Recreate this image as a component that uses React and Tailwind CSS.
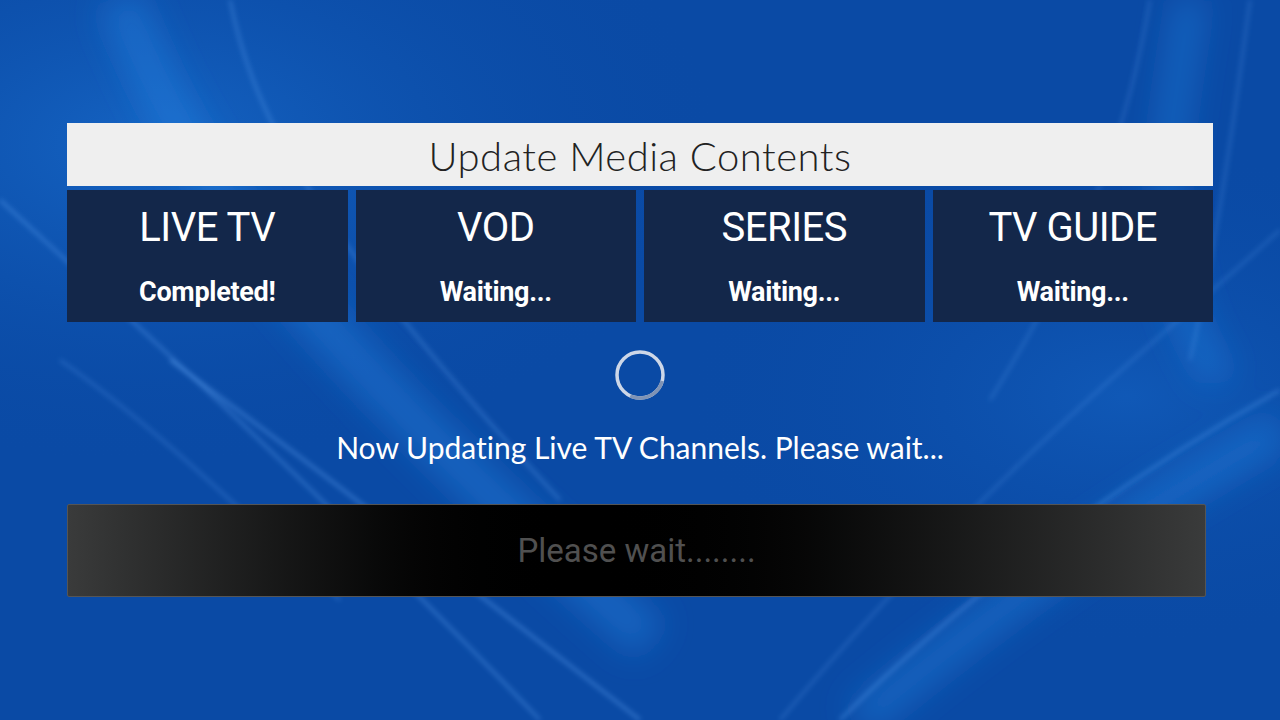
// Update Media Contents — loading screen with per-category status cards
const CATEGORIES = [
  { name: "LIVE TV", status: "Completed!" },
  { name: "VOD", status: "Waiting..." },
  { name: "SERIES", status: "Waiting..." },
  { name: "TV GUIDE", status: "Waiting..." },
];

function Backdrop() {
  // soft light streaks over the blue wallpaper
  return (
    <svg
      className="absolute inset-0 w-full h-full"
      viewBox="0 0 1280 720"
      preserveAspectRatio="none"
    >
      <defs>
        <radialGradient id="glowTL" cx="0.12" cy="0.2" r="0.45">
          <stop offset="0" stopColor="#1a6fd0" stopOpacity="0.7" />
          <stop offset="1" stopColor="#0a4aa5" stopOpacity="0" />
        </radialGradient>
        <radialGradient id="glowR" cx="0.88" cy="0.55" r="0.35">
          <stop offset="0" stopColor="#1667c8" stopOpacity="0.5" />
          <stop offset="1" stopColor="#0a4aa5" stopOpacity="0" />
        </radialGradient>
        <filter id="soft" x="-20%" y="-20%" width="140%" height="140%">
          <feGaussianBlur stdDeviation="2.5" />
        </filter>
        <filter id="wide" x="-20%" y="-20%" width="140%" height="140%">
          <feGaussianBlur stdDeviation="16" />
        </filter>
      </defs>
      <rect width="1280" height="720" fill="#0a4aa5" />
      <rect width="1280" height="720" fill="url(#glowTL)" />
      <rect width="1280" height="720" fill="url(#glowR)" />

      {/* wide glows */}
      <g filter="url(#wide)" fill="none" stroke="#2a86e6" strokeOpacity="0.4">
        <path d="M120 0 C 180 150, 260 300, 650 640" strokeWidth="45" />
        <path d="M1280 430 C 1120 520, 980 620, 860 720" strokeWidth="36" />
        <path d="M1190 0 C 1170 140, 1140 260, 1220 380" strokeWidth="30" />
      </g>

      {/* thin streaks */}
      <g filter="url(#soft)" fill="none" stroke="#6fb2ff">
        <path d="M0 200 C 120 310, 300 470, 540 720" strokeWidth="2.5" strokeOpacity="0.4" />
        <path d="M60 360 C 160 430, 250 520, 340 600" strokeWidth="2" strokeOpacity="0.35" />
        <path d="M170 360 C 320 470, 460 580, 640 720" strokeWidth="3" strokeOpacity="0.4" />
        <path d="M230 0 C 250 100, 300 220, 560 500" strokeWidth="3" strokeOpacity="0.3" />
        <path d="M1280 390 C 1120 480, 960 600, 840 720" strokeWidth="2.5" strokeOpacity="0.4" />
        <path d="M1280 230 C 1160 340, 1000 460, 780 720" strokeWidth="2" strokeOpacity="0.3" />
        <path d="M1150 0 C 1130 120, 1090 240, 990 400" strokeWidth="2" strokeOpacity="0.3" />
        <path d="M1250 0 C 1230 150, 1215 250, 1190 360" strokeWidth="2.5" strokeOpacity="0.25" />
      </g>
    </svg>
  );
}

function Spinner() {
  return (
    <svg width="52" height="52" viewBox="0 0 52 52">
      <circle cx="26" cy="26" r="23" fill="none" stroke="#cdd7e8" strokeWidth="3.5" />
      <circle
        cx="26"
        cy="26"
        r="23"
        fill="none"
        stroke="#7f93b5"
        strokeWidth="3.5"
        strokeDasharray="40 200"
        transform="rotate(15 26 26)"
      />
    </svg>
  );
}

export default function App() {
  return (
    <div className="relative w-[1280px] h-[720px] overflow-hidden bg-[#0a4aa5]">
      <Backdrop />

      <div className="relative z-10 flex flex-col pt-[123px] px-[67px]">
        {/* Title bar */}
        <div className="h-[63px] bg-[#efefef] flex items-center justify-center">
          <h1
            className="text-[40px] font-light text-[#222] leading-none tracking-[0.5px] mt-[3px]"
            style={{ fontFamily: "Lato, 'Noto Sans', sans-serif" }}
          >
            Update Media Contents
          </h1>
        </div>

        {/* Category cards */}
        <div className="grid grid-cols-4 gap-2 mt-1">
          {CATEGORIES.map((c) => (
            <div
              key={c.name}
              className="h-[132px] bg-[#13274a] flex flex-col items-center pt-[18px] text-white"
              style={{ fontFamily: "Roboto, 'Liberation Sans', sans-serif" }}
            >
              <p className="text-[40px] leading-[40px] tracking-[-0.5px]">{c.name}</p>
              <p className="text-[27px] leading-[27px] font-bold mt-[31px] tracking-[-0.3px]">
                {c.status}
              </p>
            </div>
          ))}
        </div>

        {/* Progress */}
        <div className="flex justify-center mt-[27px]">
          <Spinner />
        </div>
        <p
          className="text-center text-white text-[30px] leading-none mt-[31px] [font-variant-ligatures:none]"
          style={{ fontFamily: "Lato, 'Noto Sans', sans-serif" }}
        >
          Now Updating Live TV Channels. Please wait...
        </p>

        {/* Message box */}
        <div className="mt-[42px] mr-[7px] h-[93px] rounded-[2px] border border-[#555] bg-gradient-to-r from-[#3a3b3b] via-[#000] via-45% to-[#3a3b3b] flex items-center justify-center">
          <p
            className="text-[33px] text-[#505050] leading-none"
            style={{ fontFamily: "Roboto, 'Liberation Sans', sans-serif" }}
          >
            Please wait........
          </p>
        </div>
      </div>
    </div>
  );
}
